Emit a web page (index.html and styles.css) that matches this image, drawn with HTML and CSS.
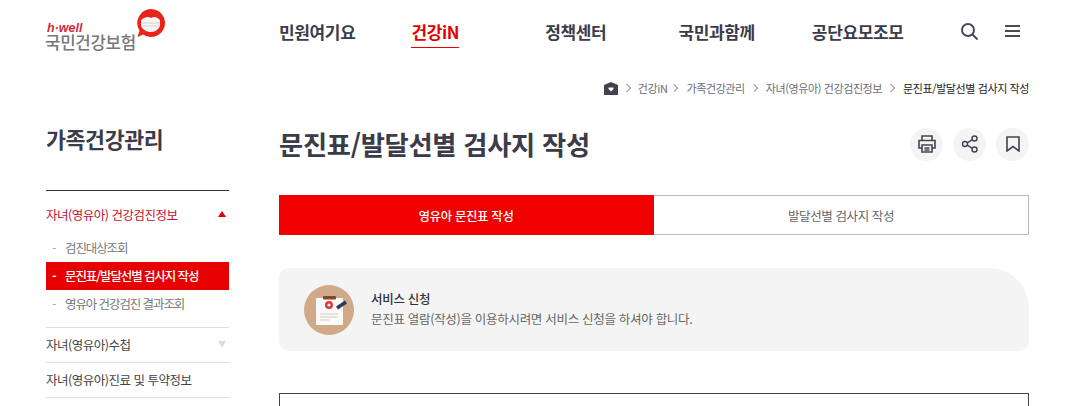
FILE: index.html
```html
<!DOCTYPE html>
<html lang="ko">
<head>
  <meta charset="UTF-8" />
  <title>문진표/발달선별 검사지 작성</title>
  <link rel="stylesheet" href="styles.css">
</head>
<body>
  <header class="header">
    <a class="logo" href="#">
      <span class="logo-text">
        <em>h·well</em>
        <strong>국민건강보험</strong>
      </span>
      <svg class="logo-mark" width="29" height="29" viewBox="0 0 29 29">
        <path d="M15 0a14 14 0 1 1-8 25.500L1.500 28l2-6.500A14 14 0 0 1 15 0z" fill="#e8231b"/>
        <path d="M5 11c4-3 7-4 10-2 3-2 6-1 9 2v6c-2 4-5 6-9 6s-8-2-10-6z" fill="#f6f3f0"/>
        <path d="M6 14h18M6 17h18" stroke="#d9d4cf" stroke-width="1"/>
      </svg>
    </a>
    <nav class="gnb">
      <a href="#">민원여기요</a>
      <a href="#" class="on">건강iN</a>
      <a href="#">정책센터</a>
      <a href="#">국민과함께</a>
      <a href="#">공단요모조모</a>
    </nav>
    <div class="util">
      <svg width="17" height="17" viewBox="0 0 17 17" fill="none" stroke="#4a4a57" stroke-width="2"><circle cx="7" cy="7" r="6"/><path d="M11.500 11.500l5 5"/></svg>
      <svg width="15" height="12" viewBox="0 0 15 12" stroke="#4a4a57" stroke-width="2"><path d="M0 1h15M0 6h15M0 11h15"/></svg>
    </div>
  </header>

  <div class="crumbs">
    <svg width="14" height="13" viewBox="0 0 14 13"><path d="M7 0l7 3v10H0V3z" fill="#41414f"/><path d="M7 9.500L4.500 7V5.500h5V7z" fill="#fff"/></svg>
    <i class="sep first"></i><span>건강iN</span>
    <i class="sep second"></i><span>가족건강관리</span>
    <i class="sep"></i><span>자녀(영유아) 건강검진정보</span>
    <i class="sep"></i><span class="now">문진표/발달선별 검사지 작성</span>
  </div>

  <div class="wrap">
    <aside class="side">
      <h2>가족건강관리</h2>
      <ul class="menu">
        <li class="open">
          <a class="menu-title" href="#">자녀(영유아) 건강검진정보<i class="arrow up"></i></a>
          <ul class="sub">
            <li><a href="#">검진대상조회</a></li>
            <li class="on"><a href="#">문진표/발달선별 검사지 작성</a></li>
            <li><a href="#">영유아 건강검진 결과조회</a></li>
          </ul>
        </li>
        <li><a class="menu-title" href="#">자녀(영유아)수첩<i class="arrow down"></i></a></li>
        <li><a class="menu-title" href="#">자녀(영유아)진료 및 투약정보</a></li>
      </ul>
    </aside>

    <main class="content">
      <div class="title-row">
        <h1>문진표/발달선별 검사지 작성</h1>
        <div class="tools">
          <button type="button"><svg width="20" height="20" viewBox="0 0 20 20" fill="none" stroke="#444452" stroke-width="1.600"><path d="M5 6V2h10v4M5 14H2V6.500h16V14h-3"/><path d="M5 11h10v7H5zM7.500 14h5M7.500 16h5"/></svg></button>
          <button type="button"><svg width="18" height="20" viewBox="0 0 18 20" fill="none" stroke="#444452" stroke-width="1.500"><circle cx="13.500" cy="4.500" r="2.500"/><circle cx="4" cy="10" r="2.500"/><circle cx="13.500" cy="15.500" r="2.500"/><path d="M6.200 8.800l5-3M6.200 11.200l5 3"/></svg></button>
          <button type="button"><svg width="14" height="16" viewBox="0 0 14 16" fill="none" stroke="#444452" stroke-width="1.600"><path d="M1 1h12v14l-6-4.500L1 15z"/></svg></button>
        </div>
      </div>

      <div class="tabs">
        <a class="tab on" href="#">영유아 문진표 작성</a>
        <a class="tab" href="#">발달선별 검사지 작성</a>
      </div>

      <div class="notice">
        <svg class="notice-icon" width="50" height="50" viewBox="0 0 50 50">
          <circle cx="25" cy="25" r="25" fill="#cfa988"/>
          <rect x="12" y="13" width="27" height="27" rx="1" fill="#fbfaf8"/>
          <rect x="19" y="11" width="13" height="3.500" rx="1" fill="#7c4a32"/>
          <circle cx="25" cy="20" r="4" fill="#dd3a35"/>
          <circle cx="25" cy="20" r="1.600" fill="#fff"/>
          <path d="M16 29h18M16 32h18M16 35h9" stroke="#cfcac5" stroke-width="1"/>
          <path d="M33 23l9-6" stroke="#2d3c5b" stroke-width="3.500"/>
        </svg>
        <div class="notice-text">
          <strong>서비스 신청</strong>
          <p>문진표 열람(작성)을 이용하시려면 서비스 신청을 하셔야 합니다.</p>
        </div>
      </div>

      <div class="box"></div>
    </main>
  </div>
</body>
</html>
```

FILE: styles.css
```css
html, body {
  margin: 0;
  padding: 0;
  height: 406px;
  overflow: hidden;
  background: #fff;
  font-family: "Noto Sans CJK KR", "Noto Sans", sans-serif;
  color: #333;
}
a {
  color: inherit;
  text-decoration: none;
}
ul {
  list-style: none;
  margin: 0;
  padding: 0;
}

.header {
  display: flex;
  align-items: center;
  height: 64px;
  padding: 0 52px 0 45px;
}
.logo {
  display: flex;
  align-items: flex-start;
  align-self: flex-start;
  width: 234px;
  flex-shrink: 0;
}
.logo-text {
  display: flex;
  flex-direction: column;
  margin-top: 22px;
  line-height: 1;
}
.logo-text em {
  margin-left: 2px;
  color: #d22a3a;
  font: italic bold 12.500px/12px "Liberation Sans", sans-serif;
}
.logo-text strong {
  color: #77777a;
  font-size: 16.800px;
  font-weight: 500;
  letter-spacing: -0.3px;
}
.logo-mark {
  margin: 9px 0 0 0;
}
.gnb {
  display: flex;
  flex: 1;
  margin-top: -2px;
}
.gnb a {
  font-size: 17px;
  line-height: 25px;
  font-weight: 700;
  color: #3b3b49;
  margin-right: 56px;
  letter-spacing: -0.35px;
  padding: 4px 0 3px;
  border-bottom: 1px solid transparent;
}
.gnb a.on {
  color: #e60000;
  border-bottom-color: #e60000;
  margin-right: 86px;
}
.gnb a:nth-child(3) {
  margin-right: 72px;
}
.gnb a:nth-child(4) {
  margin-right: 57px;
}
.gnb a:last-child {
  margin-right: 0;
}
.util {
  display: flex;
  align-items: center;
  gap: 27px;
  margin-top: -2px;
}

.crumbs {
  display: flex;
  align-items: center;
  justify-content: flex-end;
  padding: 14px 43px 0 0;
  height: 20px;
  font-size: 11px;
  letter-spacing: -0.4px;
  color: #6b6b75;
}
.crumbs .sep {
  width: 5px;
  height: 5px;
  margin: 0 9px 0 6px;
  border-top: 1px solid #999;
  border-right: 1px solid #999;
  transform: rotate(45deg);
}
.crumbs .sep.first {
  margin-right: 8px;
}
.crumbs .sep.second {
  margin-left: 4px;
}
.crumbs .now {
  color: #222;
}

.wrap {
  display: flex;
  padding: 0 43px 0 46px;
  margin-top: 18px;
}
.side {
  width: 183px;
  flex-shrink: 0;
  margin-right: 50px;
}
.side h2 {
  margin: 0;
  padding: 8px 0 36px;
  font-size: 21.700px;
  line-height: 30px;
  font-weight: 700;
  color: #3b3b49;
  letter-spacing: -0.4px;
  border-bottom: 1px solid #333;
}
.menu > li {
  border-bottom: 1px solid #ddd;
}
.menu-title {
  display: flex;
  box-sizing: border-box;
  justify-content: space-between;
  align-items: center;
  height: 34px;
  padding-bottom: 2px;
  font-size: 12.500px;
  letter-spacing: -0.5px;
  color: #444;
}
.open .menu-title {
  height: 50px;
  padding-bottom: 4px;
  color: #c8102e;
}
.arrow {
  width: 0;
  height: 0;
  margin-right: 3px;
  border-left: 4px solid transparent;
  border-right: 4px solid transparent;
}
.arrow.up {
  border-bottom: 6px solid #e60000;
}
.arrow.down {
  border-top: 7px solid #ddd;
}
.sub {
  padding-bottom: 9px;
  margin-top: -7px;
}
.sub li {
  height: 28px;
  line-height: 27px;
  padding-left: 6px;
  font-size: 12.500px;
  letter-spacing: -1.100px;
  color: #777;
}
.sub li a::before {
  content: "-";
  display: inline-block;
  width: 13px;
  color: #aaa;
}
.sub li.on {
  background: #e60000;
  color: #fff;
  font-weight: 500;
}
.sub li.on a::before {
  color: #fff;
  font-weight: 700;
}

.content {
  flex: 1;
  min-width: 0;
}
.title-row {
  display: flex;
  justify-content: space-between;
  align-items: center;
  height: 56px;
}
.title-row h1 {
  margin: 0;
  padding-bottom: 2px;
  font-size: 26.300px;
  font-weight: 700;
  color: #3b3b49;
  letter-spacing: -0.3px;
}
.tools {
  display: flex;
  gap: 10px;
}
.tools button {
  display: flex;
  align-items: center;
  justify-content: center;
  width: 33px;
  height: 33px;
  padding: 0;
  border: none;
  border-radius: 50%;
  background: #f4f4f4;
}
.tabs {
  display: flex;
  margin-top: 23px;
  height: 40px;
}
.tab {
  flex: 1;
  display: flex;
  align-items: center;
  justify-content: center;
  font-size: 12.500px;
  letter-spacing: -0.4px;
  color: #666;
  border: 1px solid #bbb;
  border-left: none;
}
.tab.on {
  background: #f10000;
  border-color: #f10000;
  color: #fff;
  font-weight: 500;
}
.notice {
  display: flex;
  align-items: center;
  gap: 17px;
  height: 83px;
  margin-top: 33px;
  padding-left: 25px;
  background: #f4f4f4;
  border-radius: 10px 40px 10px 10px;
}
.notice-text {
  margin-top: -2px;
}
.notice strong {
  display: block;
  font-size: 12.500px;
  font-weight: 500;
  color: #333;
  line-height: 20px;
  letter-spacing: -0.3px;
}
.notice p {
  margin: 0;
  font-size: 12.500px;
  line-height: 20px;
  color: #666;
  letter-spacing: -0.3px;
}
.box {
  height: 12px;
  margin-top: 42px;
  border: 1px solid #444;
  border-bottom: none;
}
```
